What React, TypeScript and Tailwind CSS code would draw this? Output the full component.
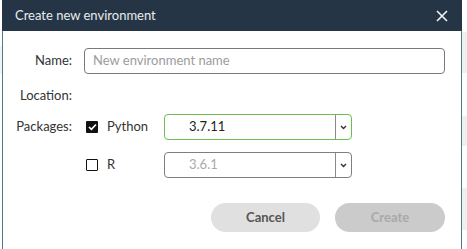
import React from "react";

function Chevron() {
  return (
    <svg width="7" height="5" viewBox="0 0 7 5" className="text-[#333]">
      <path d="M1 1l2.5 2.5L6 1" fill="none" stroke="currentColor" strokeWidth="1.4" />
    </svg>
  );
}

function VersionSelect({ value, active }: { value: string; active?: boolean }) {
  return (
    <div
      className={
        "flex h-[26px] w-[188px] items-stretch rounded-[4px] border " +
        (active ? "border-[#6cbf4c]" : "border-[#7f7f7f]")
      }
    >
      <div className={"flex flex-1 items-center pl-[24px] " + (active ? "text-[#222]" : "text-[#a9a9a9]")}>
        {value}
      </div>
      <div className="flex w-[16px] items-center justify-center border-l border-[#8a8a8a]">
        <Chevron />
      </div>
    </div>
  );
}

function Checkbox({ checked }: { checked?: boolean }) {
  return checked ? (
    <div className="flex h-[12px] w-[12px] items-center justify-center rounded-[1px] bg-[#111]">
      <svg width="9" height="8" viewBox="0 0 9 8">
        <path d="M1 4l2.4 2.4L8 1.5" fill="none" stroke="white" strokeWidth="1.6" />
      </svg>
    </div>
  ) : (
    <div className="h-[12px] w-[12px] rounded-[1px] border-[1.5px] border-[#111]" />
  );
}

export default function App() {
  return (
    <div className="flex h-[249px] w-[467px] overflow-hidden bg-white font-['Lato','Liberation_Sans',sans-serif] text-[13px] text-[#333]">
      {/* page behind the dialog */}
      <div className="flex w-[2px] flex-col bg-white">
        <div className="mt-[46px] h-[28px] bg-[#f2f2f2]" />
      </div>

      <div className="flex w-[460px] flex-col">
        <div className="flex h-[31px] items-center justify-between bg-[#253546] pl-[13px] pr-[14px] text-[13px] text-[#e8ecef]">
          <span>Create new environment</span>
          <svg width="12" height="12" viewBox="0 0 12 12">
            <path d="M1 1l10 10M11 1L1 11" stroke="#f2f4f6" strokeWidth="1.6" />
          </svg>
        </div>

        <div className="flex flex-1 flex-col border-x border-[#4f7890] bg-white">
          <div className="mt-[17px] flex h-[26px] items-center">
            <div className="w-[69px] text-right">Name:</div>
            <div className="ml-[12px] flex h-[26px] w-[361px] items-center rounded-[4px] border border-[#7a7a7a] pl-[8px] text-[#9c9c9c]">
              New environment name
            </div>
          </div>

          <div className="mt-[12px] flex h-[20px] items-center">
            <div className="w-[69px] text-right">Location:</div>
          </div>

          <div className="mt-[8px] flex h-[26px] items-center">
            <div className="w-[69px] text-right">Packages:</div>
            <div className="ml-[14px] flex w-[78px] items-center gap-[9px]">
              <Checkbox checked />
              <span>Python</span>
            </div>
            <VersionSelect value="3.7.11" active />
          </div>

          <div className="mt-[12px] flex h-[26px] items-center">
            <div className="w-[69px]" />
            <div className="ml-[14px] flex w-[78px] items-center gap-[9px]">
              <Checkbox />
              <span>R</span>
            </div>
            <VersionSelect value="3.6.1" />
          </div>

          <div className="mt-[25px] flex justify-end gap-[15px] pr-[16px]">
            <button className="h-[29px] w-[109px] rounded-full bg-[#e0e0e0] font-bold text-[#555]">Cancel</button>
            <button className="h-[29px] w-[110px] rounded-full bg-[#cbcbcb] font-bold text-[#a9a9a9]">Create</button>
          </div>
        </div>
      </div>

      <div className="flex w-[5px] flex-col bg-white">
        <div className="mt-[32px] h-[41px] bg-[#efefef]" />
        <div className="mt-[43px] h-[30px] bg-[#efefef]" />
        <div className="mt-[42px] h-[42px] bg-[#efefef]" />
      </div>
    </div>
  );
}
